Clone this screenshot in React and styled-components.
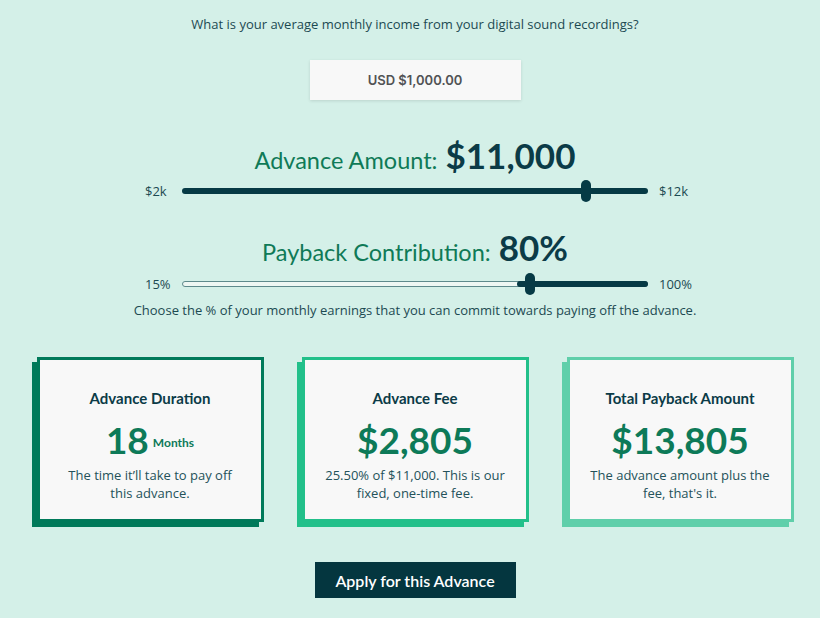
import React from 'react';
import styled, { createGlobalStyle } from 'styled-components';

const GlobalStyle = createGlobalStyle`
    html, body {
        margin: 0;
        padding: 0;
        background: #d4f0e8;
    }
    * { box-sizing: border-box; }
`;

const Page = styled.div`
    width: 820px;
    height: 618px;
    overflow: hidden;
    padding: 14px 0 0 10px;
    display: flex;
    flex-direction: column;
    align-items: center;
    background: #d4f0e8;
    color: #0b3b47;
`;

const Question = styled.p`
    margin: 0;
    font-family: "Open Sans", sans-serif;
    font-size: 13px;
    line-height: 20px;
    color: #1c4a52;
`;

const AmountBox = styled.div`
    margin-top: 26px;
    width: 211px;
    height: 40px;
    display: flex;
    align-items: center;
    justify-content: center;
    background: #f8f8f8;
    box-shadow: 0 1px 3px rgba(0, 0, 0, 0.12);
    font-family: Inter, sans-serif;
    font-weight: 600;
    font-size: 13px;
    color: #505254;
`;

const Heading = styled.div`
    margin-top: ${props => props.top}px;
    display: flex;
    align-items: baseline;
    gap: 8px;
    font-family: Lato, sans-serif;
    line-height: 44px;
`;

const HeadingLabel = styled.span`
    font-size: 23.5px;
    color: #0f7a57;
`;

const HeadingValue = styled.span`
    font-size: 35px;
    font-weight: 700;
    color: #0b3b47;
`;

const SliderRow = styled.div`
    margin-top: ${props => props.top}px;
    width: 540px;
    display: flex;
    align-items: center;
    font-family: "Open Sans", sans-serif;
    font-size: 13px;
    color: #1c4a52;
`;

const SideLabel = styled.span`
    width: 37px;
    white-space: nowrap;
    padding-left: ${props => (props.right ? '11px' : '0')};
`;

const Track = styled.div`
    position: relative;
    flex: 1;
    height: 6px;
    border-radius: 3px;
    background: ${props => (props.filled ? '#063a45' : '#eef7f3')};
    border: ${props => (props.filled ? 'none' : '1px solid #5e8a8c')};
    display: flex;
    justify-content: flex-end;
`;

const Fill = styled.div`
    height: 6px;
    margin: -1px -1px 0 0;
    border-radius: 3px;
    background: #063a45;
`;

const Thumb = styled.div`
    position: absolute;
    top: 50%;
    width: 10px;
    height: 22px;
    margin: -11px 0 0 -5px;
    border-radius: 5px;
    background: #063a45;
`;

const Hint = styled.p`
    margin: 7px 0 0;
    font-family: "Open Sans", sans-serif;
    font-size: 13px;
    line-height: 20px;
    color: #1c4a52;
`;

const Cards = styled.div`
    margin-top: 37px;
    display: grid;
    grid-template-columns: repeat(3, 227px);
    gap: 38px;
`;

const Card = styled.div`
    height: 165px;
    padding: 28px 20px 0;
    background: #f8f8f8;
    border: 3px solid ${props => props.color};
    box-shadow: -5px 5px 0 ${props => props.color};
    display: flex;
    flex-direction: column;
    align-items: center;
    text-align: center;
`;

const CardTitle = styled.div`
    font-family: Lato, sans-serif;
    font-weight: 700;
    font-size: 15px;
    line-height: 20px;
    color: #0b3b47;
`;

const CardValue = styled.div`
    margin-top: 14px;
    height: 36px;
    display: flex;
    align-items: center;
    gap: 4px;
    font-family: Lato, sans-serif;
    font-weight: 700;
    font-size: 37px;
    line-height: 36px;
    color: #0d7a58;
`;

const Unit = styled.span`
    font-size: 12px;
    line-height: 1;
    padding-top: 6px;
`;

const CardText = styled.div`
    margin-top: 8px;
    font-family: "Open Sans", sans-serif;
    font-size: 13px;
    line-height: 18px;
    color: #24525a;
`;

const ApplyButton = styled.button`
    margin-top: 40px;
    width: 201px;
    height: 36px;
    border: none;
    background: #04363f;
    color: #ffffff;
    font-family: Lato, sans-serif;
    font-weight: 600;
    font-size: 16px;
    cursor: pointer;
`;

const cards = [
    { title: 'Advance Duration', value: '18', unit: 'Months', text: 'The time it’ll take to pay off this advance.', color: '#007a5a' },
    { title: 'Advance Fee', value: '$2,805', text: '25.50% of $11,000. This is our fixed, one-time fee.', color: '#22c08a' },
    { title: 'Total Payback Amount', value: '$13,805', text: "The advance amount plus the fee, that's it.", color: '#5fcfaa' },
];

const Slider = ({ top, min, max, pos, filled }) => (
    <SliderRow top={top}>
        <SideLabel>{min}</SideLabel>
        <Track filled={filled}>
            {!filled && <Fill style={{ width: `${(1 - pos) * 100 + 3}%` }} />}
            <Thumb style={{ left: `${pos * 100}%` }} />
        </Track>
        <SideLabel right>{max}</SideLabel>
    </SliderRow>
);

const App = () => (
    <Page>
        <GlobalStyle />
        <Question>What is your average monthly income from your digital sound recordings?</Question>
        <AmountBox>USD $1,000.00</AmountBox>

        <Heading top={33}>
            <HeadingLabel>Advance Amount:</HeadingLabel>
            <HeadingValue>$11,000</HeadingValue>
        </Heading>
        <Slider top={0} min="$2k" max="$12k" pos={0.868} filled />

        <Heading top={25}>
            <HeadingLabel>Payback Contribution:</HeadingLabel>
            <HeadingValue>80%</HeadingValue>
        </Heading>
        <Slider top={1} min="15%" max="100%" pos={0.748} />
        <Hint>Choose the % of your monthly earnings that you can commit towards paying off the advance.</Hint>

        <Cards>
            {cards.map(card => (
                <Card key={card.title} color={card.color}>
                    <CardTitle>{card.title}</CardTitle>
                    <CardValue>
                        {card.value}
                        {card.unit && <Unit>{card.unit}</Unit>}
                    </CardValue>
                    <CardText>{card.text}</CardText>
                </Card>
            ))}
        </Cards>

        <ApplyButton>Apply for this Advance</ApplyButton>
    </Page>
);

export default App;
